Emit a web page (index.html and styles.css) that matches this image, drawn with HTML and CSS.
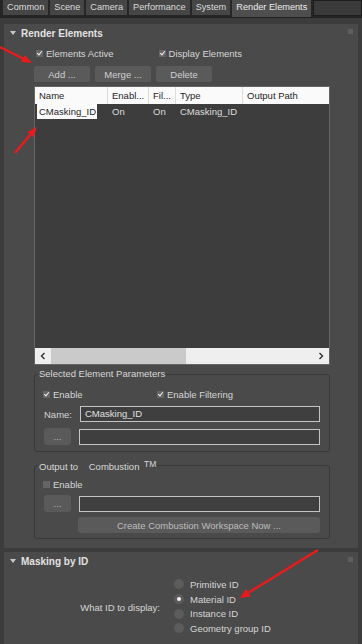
FILE: index.html
```html
<!DOCTYPE html>
<html lang="en">
<head>
    <meta charset="UTF-8">
    <meta name="viewport" content="width=device-width, initial-scale=1.0">
    <title>Render Setup - Render Elements</title>
    <link rel="stylesheet" href="styles.css">
</head>
<body>
    <div class="tabs">
        <div class="tab">Common</div>
        <div class="tab">Scene</div>
        <div class="tab">Camera</div>
        <div class="tab">Performance</div>
        <div class="tab">System</div>
        <div class="tab active">Render Elements</div>
        <div class="tab-rest"></div>
    </div>

    <div class="rollout first">
        <div class="rollout-head">
            <span class="tri"></span>
            <span class="rollout-title">Render Elements</span>
            <span class="pin"></span>
        </div>
        <div class="content">
            <div class="check-row">
                <label class="check"><span class="box on"></span>Elements Active</label>
                <label class="check second"><span class="box on"></span>Display Elements</label>
            </div>
            <div class="btn-row">
                <button class="btn">Add ...</button>
                <button class="btn">Merge ...</button>
                <button class="btn">Delete</button>
            </div>

            <div class="list">
                <div class="list-head">
                    <div class="col c-name">Name</div>
                    <div class="col c-en">Enabl...</div>
                    <div class="col c-fil">Fil...</div>
                    <div class="col c-type">Type</div>
                    <div class="col c-out">Output Path</div>
                </div>
                <div class="list-body">
                    <div class="list-row">
                        <div class="col c-name"><span class="sel">CMasking_ID</span></div>
                        <div class="col c-en">On</div>
                        <div class="col c-fil">On</div>
                        <div class="col c-type">CMasking_ID</div>
                        <div class="col c-out"></div>
                    </div>
                </div>
                <div class="hscroll">
                    <svg class="arr" width="8" height="8" viewBox="0 0 8 8"><polyline points="5.5,1 2.5,4 5.5,7" /></svg>
                    <div class="track"><div class="thumb"></div></div>
                    <svg class="arr" width="8" height="8" viewBox="0 0 8 8"><polyline points="2.5,1 5.5,4 2.5,7" /></svg>
                </div>
            </div>

            <fieldset class="group g1">
                <legend>Selected Element Parameters</legend>
                <div class="check-row inner">
                    <label class="check"><span class="box on"></span>Enable</label>
                    <label class="check second"><span class="box on"></span>Enable Filtering</label>
                </div>
                <div class="field-row">
                    <span class="field-label">Name:</span>
                    <div class="input">CMasking_ID</div>
                </div>
                <div class="field-row">
                    <button class="btn small">...</button>
                    <div class="input"></div>
                </div>
            </fieldset>

            <fieldset class="group g2">
                <legend>Output to <span class="gap"></span>Combustion <sup>TM</sup></legend>
                <div class="check-row inner">
                    <label class="check"><span class="box"></span>Enable</label>
                </div>
                <div class="field-row">
                    <button class="btn small">...</button>
                    <div class="input"></div>
                </div>
                <div class="field-row">
                    <button class="btn wide">Create Combustion Workspace Now ...</button>
                </div>
            </fieldset>
        </div>
    </div>

    <div class="rollout second-roll">
        <div class="rollout-head">
            <span class="tri"></span>
            <span class="rollout-title">Masking by ID</span>
            <span class="pin"></span>
        </div>
        <div class="id-row">
            <span class="id-label">What ID to display:</span>
            <div class="radios">
                <label class="radio"><span class="dot"></span>Primitive ID</label>
                <label class="radio"><span class="dot on"></span>Material ID</label>
                <label class="radio"><span class="dot"></span>Instance ID</label>
                <label class="radio"><span class="dot"></span>Geometry group ID</label>
            </div>
        </div>
    </div>

    <!-- red annotation arrows drawn over the screenshot -->
    <svg class="arrows" width="362" height="644" viewBox="0 0 362 644">
        <line x1="0" y1="47" x2="23.5" y2="58.7" />
        <polygon points="32,63 21.3,62.1 24.9,54.9" />
        <line x1="15" y1="153" x2="30.8" y2="134.3" />
        <polygon points="37,127 33.6,137.2 27.5,132" />
        <line x1="318" y1="550" x2="248.8" y2="592.6" />
        <polygon points="240,598 246.2,589 250.9,596.6" />
    </svg>
</body>
</html>
```

FILE: styles.css
```css
body {
    margin: 0;
    width: 362px;
    height: 644px;
    overflow: hidden;
    position: relative;
    background: #3c3c3c;
    font-family: "Liberation Sans", Arial, sans-serif;
    font-size: 9.5px;
    color: #d6d6d6;
}
.tabs {
    display: flex;
    height: 17px;
    background: #262626;
    padding-left: 3px;
    border-bottom: 1px solid #222;
}
.tab {
    background: #464646;
    color: #dcdcdc;
    font-size: 9.2px;
    padding: 0 4px;
    margin-right: 2px;
    line-height: 15px;
    height: 15px;
}
.tab.active {
    background: #4e4e4e;
    color: #ececec;
    height: 17px;
}
.tab-rest {
    flex: 1;
    background: #3a3a3a;
    border: 1px solid #1d1d1d;
    height: 14px;
}
.rollout {
    margin: 0 4px;
    background: #4a4a4a;
}
.rollout.first {
    margin-top: 6px;
    height: 524px;
}
.rollout.second-roll {
    margin-top: 4px;
    height: 100px;
}
.rollout-head {
    display: flex;
    align-items: center;
    height: 18px;
    padding-left: 6px;
}
.tri {
    width: 0;
    height: 0;
    border-left: 3px solid transparent;
    border-right: 3px solid transparent;
    border-top: 4px solid #c8c8c8;
    margin-right: 5px;
}
.rollout-title {
    font-weight: bold;
    font-size: 10px;
    color: #e2e2e2;
    flex: 1;
}
.pin {
    width: 5px;
    height: 5px;
    background: #5e5e5e;
    margin-right: 5px;
    margin-top: -3px;
}
.content {
    padding: 0 28px 0 30px;
}
.check-row {
    display: flex;
    align-items: center;
    height: 12px;
    margin-top: 5px;
    padding-left: 2px;
}
.check {
    display: flex;
    align-items: center;
}
.check-row > .second {
    margin-left: auto;
    margin-right: 88px;
}
.box {
    width: 7px;
    height: 7px;
    background: #656565;
    margin-right: 3px;
    position: relative;
}
.box.on::after {
    content: "";
    position: absolute;
    left: 2px;
    top: 0;
    width: 2px;
    height: 4px;
    border: solid #f0f0f0;
    border-width: 0 1.3px 1.3px 0;
    transform: rotate(40deg);
}
.btn-row {
    display: flex;
    gap: 5px;
    margin-top: 7px;
}
.btn {
    font-family: inherit;
    font-size: 9.5px;
    color: #cfcfcf;
    background: #5a5a5a;
    border: none;
    border-radius: 2px;
    height: 16px;
    width: 56px;
    padding: 0;
}
.list {
    margin-top: 4px;
    height: 277px;
    border: 1px solid #666;
    display: flex;
    flex-direction: column;
}
.list-head {
    display: flex;
    height: 17px;
    background: #fafafa;
    color: #1e1e1e;
}
.list-head .col {
    border-right: 1px solid #dcdcdc;
    line-height: 17px;
}
.col {
    padding-left: 4px;
    box-sizing: border-box;
    white-space: nowrap;
    overflow: hidden;
}
.c-name { width: 73px; }
.c-en { width: 41px; }
.c-fil { width: 27px; }
.c-type { width: 67px; }
.c-out { flex: 1; border-right: none !important; }
.list-body {
    flex: 1;
    background: #3d3d3d;
}
.list-row {
    display: flex;
    height: 15px;
    line-height: 15px;
    color: #dedede;
}
.list-row .c-name {
    padding-left: 2px;
}
.sel {
    display: inline-block;
    background: #fbfbfb;
    color: #1e1e1e;
    padding: 0 2px;
    width: 56px;
    border-bottom: 1px solid #bbb;
}
.hscroll {
    display: flex;
    align-items: center;
    height: 16px;
    background: #efefef;
}
.arr {
    margin: 0 4px;
}
.arr polyline {
    fill: none;
    stroke: #333;
    stroke-width: 1.4;
}
.track {
    flex: 1;
    height: 16px;
}
.thumb {
    width: 135px;
    height: 16px;
    background: #cacaca;
}
.group {
    margin: 3px 0 0;
    padding: 0 9px 6px 8px;
    border: 1px solid #393939;
    border-radius: 3px;
    min-width: 0;
}
.group legend {
    padding: 0 1px;
    margin-left: -5px;
    color: #d8d8d8;
    line-height: 12px;
}
.group.g2 {
    margin-top: 6px;
    padding-bottom: 5px;
}
.gap {
    display: inline-block;
    width: 8px;
}
sup {
    font-size: 8.5px;
    vertical-align: 3px;
    margin-left: 2px;
}
.check-row.inner {
    margin-top: 8px;
    padding-left: 0;
}
.g2 .check-row.inner {
    margin-top: 5px;
}
.check-row.inner > .second {
    margin-right: 87px;
}
.field-row {
    display: flex;
    align-items: center;
    margin-top: 6px;
}
.g2 .field-row {
    margin-top: 5px;
}
.field-label {
    width: 35px;
    padding-left: 1px;
}
.input {
    flex: 1;
    margin-left: 1px;
    height: 14px;
    line-height: 14px;
    border: 1px solid #c4c4c4;
    background: #3f3f3f;
    color: #e0e0e0;
    padding-left: 4px;
}
.btn.small {
    width: 27px;
    height: 17px;
    margin-left: 1px;
    margin-right: 7px;
    border-radius: 3px;
    color: #bbb;
}
.btn.wide {
    width: 242px;
    margin-left: 35px;
    border-radius: 3px;
    color: #bdbdbd;
}
.id-row {
    display: flex;
    align-items: center;
    padding-top: 7px;
}
.id-label {
    width: 156px;
    text-align: right;
    margin-right: 14px;
    padding-top: 2px;
}
.radios {
    display: flex;
    flex-direction: column;
}
.radio {
    display: flex;
    align-items: center;
    height: 14.7px;
}
.dot {
    width: 10px;
    height: 10px;
    border-radius: 50%;
    background: #5c5c5c;
    margin-right: 6px;
    position: relative;
}
.dot.on::after {
    content: "";
    position: absolute;
    left: 3px;
    top: 3px;
    width: 4px;
    height: 4px;
    border-radius: 50%;
    background: #f2f2f2;
}
.arrows {
    position: absolute;
    left: 0;
    top: 0;
    pointer-events: none;
}
.arrows line {
    stroke: #ec1a1d;
    stroke-width: 2.4;
}
.arrows polygon {
    fill: #ec1a1d;
}
```
